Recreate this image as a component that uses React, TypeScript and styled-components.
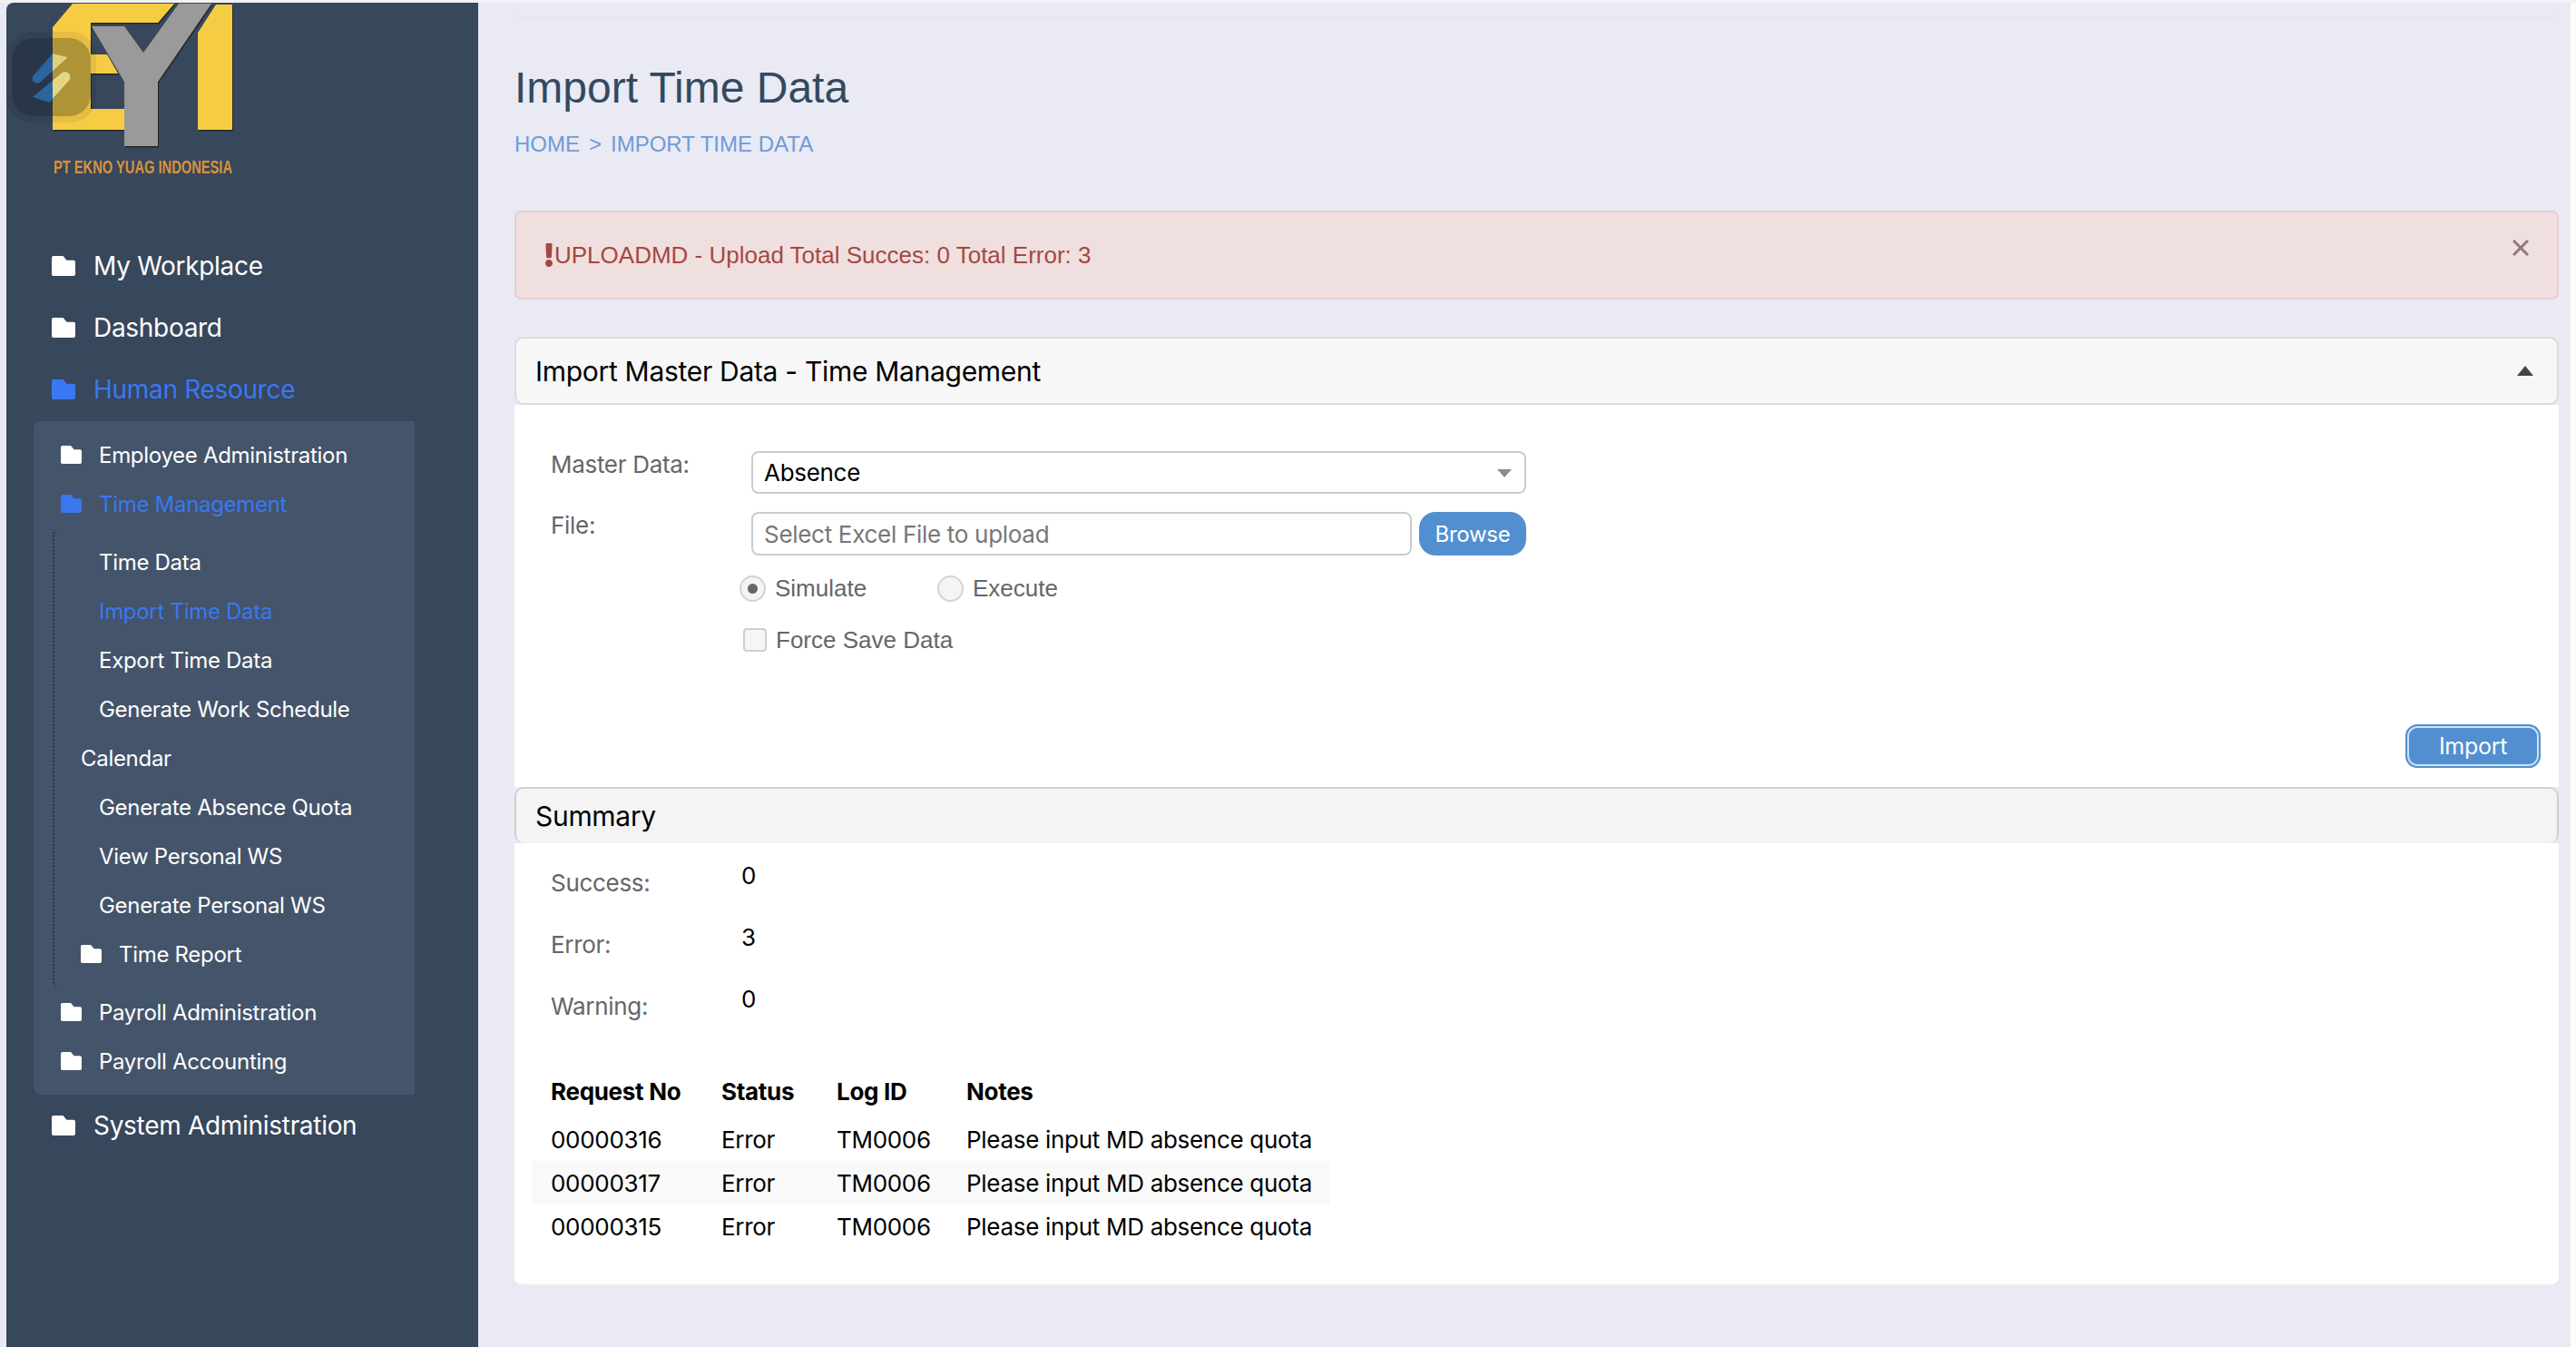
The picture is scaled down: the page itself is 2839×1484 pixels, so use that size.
import React from 'react';
import styled, { createGlobalStyle } from 'styled-components';
import { FaExclamation } from 'react-icons/fa';

const GlobalStyle = createGlobalStyle`
  html, body {
    margin: 0;
    padding: 0;
    width: 2839px;
    height: 1484px;
    overflow: hidden;
    background: #f1f2f3;
  }
  * {
    box-sizing: border-box;
  }
`;

const rubik = `Inter, "Noto Sans", sans-serif`;
const helvetica = `"Liberation Sans", Arial, sans-serif`;

const Page = styled.div`
  display: flex;
  width: 2839px;
  height: 1484px;
  padding: 3px 6px 0 0;
  background: linear-gradient(#f1f2f3 3px, #fcfcfd 3px);
  font-family: ${rubik};
`;

const Shell = styled.div`
  display: flex;
  flex: 1;
  padding-left: 7px;
  background: #e9eaf3;
`;

const Sidebar = styled.aside`
  position: relative;
  width: 520px;
  flex-shrink: 0;
  background: #37475c;
  border-top-left-radius: 8px;
`;

const LogoBox = styled.div`
  height: 259px;
  padding-left: 43px;
`;

const FloatBadge = styled.div`
  position: absolute;
  left: 0;
  top: 32px;
  width: 99px;
  height: 100px;
  padding: 7px 6px;
  border-radius: 28px;
  background: rgba(10, 15, 25, 0.08);
`;

const FloatBadgeInner = styled.div`
  width: 87px;
  height: 86px;
  border-radius: 24px;
  background: rgba(10, 15, 25, 0.24);
`;

const NavItem = styled.div<{ $active?: boolean }>`
  display: flex;
  align-items: center;
  gap: 20px;
  height: 68px;
  padding-left: 50px;
  font-size: 28px;
  letter-spacing: -0.3px;
  color: ${(p) => (p.$active ? '#3a78f2' : '#ffffff')};
`;

const SubPanel = styled.div`
  width: 420px;
  margin: 1px 0 0 30px;
  padding: 10px 0;
  background: #44546a;
  border-radius: 8px 0 0 8px;
`;

const SubItem = styled.div<{ $active?: boolean }>`
  display: flex;
  align-items: center;
  gap: 19px;
  height: 54px;
  padding-left: 30px;
  font-size: 24px;
  letter-spacing: -0.3px;
  color: ${(p) => (p.$active ? '#3a78f2' : '#ffffff')};
`;

const Tree = styled.div`
  margin-left: 21px;
  padding: 10px 0;
  border-left: 2px dotted #27313f;
  border-radius: 8px 0 0 8px;
`;

const TreeItem = styled.div<{ $active?: boolean; $indent?: number }>`
  display: flex;
  align-items: center;
  gap: 19px;
  height: 54px;
  padding-left: ${(p) => p.$indent ?? 49}px;
  font-size: 24px;
  letter-spacing: -0.3px;
  color: ${(p) => (p.$active ? '#3a78f2' : '#ffffff')};
`;

const Main = styled.main`
  flex: 1;
  min-width: 0;
  padding: 0 13px 0 40px;
`;

const TopLine = styled.div`
  height: 17px;
  border-bottom: 2px solid #e4e5ee;
  border-radius: 0 0 8px 8px;
`;

const Title = styled.h1`
  margin: 47px 0 0;
  font: 400 48px/60px ${helvetica};
  color: #34495e;
`;

const Breadcrumb = styled.div`
  display: flex;
  gap: 10px;
  margin-top: 17px;
  font: 400 24px/30px ${helvetica};
  color: #6e9bd9;
`;

const Alert = styled.div`
  position: relative;
  display: flex;
  align-items: center;
  height: 98px;
  margin-top: 58px;
  padding-left: 31px;
  background: #f0dfdf;
  border: 2px solid #e8cdd2;
  border-radius: 7px;
  font: 400 26px/30px ${helvetica};
  color: #a5483f;
`;

const AlertMark = styled(FaExclamation)`
  width: 10px;
  height: 26px;
  margin-right: 1px;
`;

const CloseIcon = styled.svg`
  position: absolute;
  right: 31px;
  top: 30px;
  width: 18px;
  height: 18px;
`;

const PanelHead = styled.div`
  display: flex;
  align-items: center;
  justify-content: space-between;
  height: 75px;
  margin-top: 41px;
  padding: 0 26px 0 21px;
  background: #f7f7f7;
  border: 2px solid #dcdcdf;
  border-radius: 10px;
  font-size: 30px;
  letter-spacing: -0.3px;
  color: #000;
`;

const Caret = styled.span`
  width: 0;
  height: 0;
  border-left: 9px solid transparent;
  border-right: 9px solid transparent;
  border-bottom: 11px solid #44464c;
`;

const Body = styled.section`
  background: #fff;
`;

const FormBody = styled(Body)`
  display: flex;
  flex-direction: column;
  height: 421px;
  padding: 51px 20px 0 40px;
`;

const FormRow = styled.div<{ $gap?: number }>`
  display: flex;
  margin-top: ${(p) => p.$gap ?? 0}px;
`;

const FieldLabel = styled.label`
  width: 221px;
  font-size: 26px;
  line-height: 30px;
  letter-spacing: -0.3px;
  color: #666;
`;

const Control = styled.div`
  position: relative;
  display: flex;
  align-items: center;
  width: 854px;
  height: 47px;
  padding-left: 12px;
  border: 2px solid #ccc;
  border-radius: 8px;
  font-size: 26px;
  letter-spacing: -0.3px;
  color: #000;
`;

const SelectArrow = styled.span`
  position: absolute;
  right: 14px;
  top: 18px;
  border-left: 8px solid transparent;
  border-right: 8px solid transparent;
  border-top: 9px solid #8c8c8c;
`;

const FileInput = styled(Control)`
  width: 728px;
  height: 48px;
  color: #777;
`;

const Browse = styled.button`
  width: 118px;
  height: 48px;
  margin-left: 8px;
  padding: 0;
  border: 0;
  border-radius: 18px;
  background: #528fd0;
  font: 400 24px ${rubik};
  letter-spacing: -0.3px;
  color: #fff;
`;

const Options = styled.div`
  display: flex;
  align-items: center;
  padding-left: 208px;
  font: 400 26px/30px ${helvetica};
  color: #666;
`;

const Radio = styled.span<{ $on?: boolean }>`
  display: flex;
  align-items: center;
  justify-content: center;
  width: 29px;
  height: 29px;
  margin-right: 10px;
  border: 2px solid #d4d4d4;
  border-radius: 50%;
  background: #f4f4f4;

  &::after {
    content: '';
    display: ${(p) => (p.$on ? 'block' : 'none')};
    width: 11px;
    height: 11px;
    border-radius: 50%;
    background: #666;
  }
`;

const RadioGroup = styled.div`
  display: flex;
  align-items: center;
  width: 218px;
`;

const Check = styled.span`
  width: 26px;
  height: 26px;
  margin: 0 10px 0 4px;
  border: 2px solid #cfcfcf;
  border-radius: 4px;
  background: #f6f6f6;
`;

const ImportRow = styled.div`
  display: flex;
  justify-content: flex-end;
  margin-top: 78px;
`;

const ImportButton = styled.button`
  width: 149px;
  height: 48px;
  padding: 0;
  border: 2px solid #528fd0;
  border-radius: 13px;
  background: #528fd0;
  box-shadow: inset 0 0 0 2px #cfe2f6;
  font: 400 25px ${rubik};
  letter-spacing: -0.3px;
  color: #fff;
`;

const SummaryHead = styled.div`
  display: flex;
  align-items: center;
  height: 62px;
  padding-left: 21px;
  background: #f4f4f4;
  border: 2px solid #cfcfcf;
  border-bottom: 0;
  border-radius: 10px 10px 10px 10px;
  font-size: 30px;
  letter-spacing: -0.3px;
  color: #000;
`;

const SummaryBody = styled(Body)`
  height: 486px;
  padding: 10px 0 0 19px;
  border-radius: 0 0 8px 8px;
`;

const Stat = styled.div`
  display: flex;
  height: 68px;
  padding-left: 21px;
`;

const StatLabel = styled.span`
  width: 210px;
  padding-top: 17px;
  font-size: 26px;
  line-height: 34px;
  letter-spacing: -0.3px;
  color: #666;
`;

const StatValue = styled.span`
  padding-top: 9px;
  font-size: 26px;
  line-height: 34px;
  color: #000;
`;

const LogTable = styled.table`
  width: 880px;
  margin-top: 30px;
  border-collapse: collapse;
  table-layout: fixed;
  font-size: 26px;
  letter-spacing: -0.3px;
  color: #000;
`;

const HeadCell = styled.th`
  height: 58px;
  padding: 0 0 0 21px;
  text-align: left;
  font-weight: 700;
`;

const Cell = styled.td`
  height: 48px;
  padding: 0 0 0 21px;
`;

const LogRow = styled.tr<{ $odd?: boolean }>`
  background: ${(p) => (p.$odd ? '#f9f9f9' : 'transparent')};
`;

const MarkSvg = styled.svg`
  position: absolute;
  left: 23px;
  top: 15px;
`;

const Folder = ({ w = 26, h = 22, color = 'currentColor' }: { w?: number; h?: number; color?: string }) => (
  <svg width={w} height={h} viewBox="0 0 26 22" preserveAspectRatio="none" style={{ flexShrink: 0 }}>
    <path
      d="M2 0h10.5l4 4.8H24a2 2 0 0 1 2 2V20a2 2 0 0 1-2 2H2a2 2 0 0 1-2-2V2a2 2 0 0 1 2-2z"
      fill={color}
    />
  </svg>
);

const Logo = () => (
  <svg width="320" height="200" viewBox="50 0 320 200" style={{ display: 'block', marginTop: -3 }}>
    <defs>
      <filter id="logoEdge" x="-5%" y="-5%" width="110%" height="110%">
        <feDropShadow dx="1" dy="1.5" stdDeviation="0.7" floodColor="#1a1a12" floodOpacity="0.85" />
      </filter>
    </defs>
    <g filter="url(#logoEdge)">
      <polygon fill="#f7cc45" points="58,30 80,4 192,4 174,25 100,25 100,60 118,60 130,81 100,81 100,120 160,120 143,143 58,143" />
      <polygon fill="#f7cc45" points="218,36 238,5 256,5 256,143 218,143" />
      <polygon fill="#9a9a9a" points="101,29 137,29 158,58 197,4 233,4 174,90 174,161 137,161 137,90" />
    </g>
    <text
      x="59"
      y="191"
      textLength="197"
      lengthAdjust="spacingAndGlyphs"
      fill="#d9923a"
      fontFamily='"Liberation Sans", Arial, sans-serif'
      fontWeight="700"
      fontSize="20"
    >
      PT EKNO YUAG INDONESIA
    </text>
  </svg>
);

// the floating widget mark that lies over the logo
const BadgeMark = () => (
  <MarkSvg width="60" height="70" viewBox="30 50 60 70">
    <path d="M58 59l17 4-30 27a5 5 0 0 1-8-7z" fill="#2b659f" />
    <path d="M36 107l31-26a6 6 0 0 1 9 8l-21 24z" fill="#2b659f" />
    <path d="M58 59l17 4-17 15.3z" fill="#e2d078" />
    <path d="M58 88.5l9-7.5a6 6 0 0 1 9 8l-18 20z" fill="#e6d680" />
  </MarkSvg>
);

const treeRows = ['Generate Absence Quota', 'View Personal WS', 'Generate Personal WS'];
const logs = [
  { no: '00000316', status: 'Error', id: 'TM0006', note: 'Please input MD absence quota' },
  { no: '00000317', status: 'Error', id: 'TM0006', note: 'Please input MD absence quota' },
  { no: '00000315', status: 'Error', id: 'TM0006', note: 'Please input MD absence quota' },
];

const App = () => (
  <Page>
    <GlobalStyle />
    <Shell>
      <Sidebar>
        <LogoBox>
          <Logo />
        </LogoBox>
        <FloatBadge>
          <FloatBadgeInner />
          <BadgeMark />
        </FloatBadge>
        <NavItem><Folder />My Workplace</NavItem>
        <NavItem><Folder />Dashboard</NavItem>
        <NavItem $active><Folder />Human Resource</NavItem>
        <SubPanel>
          <SubItem><Folder w={23} h={20} />Employee Administration</SubItem>
          <SubItem $active><Folder w={23} h={20} />Time Management</SubItem>
          <Tree>
            <TreeItem>Time Data</TreeItem>
            <TreeItem $active>Import Time Data</TreeItem>
            <TreeItem>Export Time Data</TreeItem>
            <TreeItem>Generate Work Schedule</TreeItem>
            <TreeItem $indent={29}>Calendar</TreeItem>
            {treeRows.map((r) => (
              <TreeItem key={r}>{r}</TreeItem>
            ))}
            <TreeItem $indent={29}><Folder w={23} h={20} />Time Report</TreeItem>
          </Tree>
          <SubItem><Folder w={23} h={20} />Payroll Administration</SubItem>
          <SubItem><Folder w={23} h={20} />Payroll Accounting</SubItem>
        </SubPanel>
        <NavItem><Folder />System Administration</NavItem>
      </Sidebar>
      <Main>
        <TopLine />
        <Title>Import Time Data</Title>
        <Breadcrumb>
          <span>HOME</span>
          <span>&gt;</span>
          <span>IMPORT TIME DATA</span>
        </Breadcrumb>
        <Alert>
          <AlertMark />
          <span>UPLOADMD - Upload Total Succes: 0 Total Error: 3</span>
          <CloseIcon viewBox="0 0 18 18">
            <path d="M1 1l16 16M17 1L1 17" stroke="#8d7b7b" strokeWidth="3" />
          </CloseIcon>
        </Alert>
        <PanelHead>
          Import Master Data - Time Management
          <Caret />
        </PanelHead>
        <FormBody>
          <FormRow>
            <FieldLabel>Master Data:</FieldLabel>
            <Control>
              Absence
              <SelectArrow />
            </Control>
          </FormRow>
          <FormRow $gap={20}>
            <FieldLabel>File:</FieldLabel>
            <FileInput>Select Excel File to upload</FileInput>
            <Browse>Browse</Browse>
          </FormRow>
          <FormRow $gap={21}>
            <Options>
              <RadioGroup><Radio $on />Simulate</RadioGroup>
              <RadioGroup><Radio />Execute</RadioGroup>
            </Options>
          </FormRow>
          <FormRow $gap={27}>
            <Options>
              <Check />Force Save Data
            </Options>
          </FormRow>
          <ImportRow>
            <ImportButton>Import</ImportButton>
          </ImportRow>
        </FormBody>
        <SummaryHead>Summary</SummaryHead>
        <SummaryBody>
          <Stat><StatLabel>Success:</StatLabel><StatValue>0</StatValue></Stat>
          <Stat><StatLabel>Error:</StatLabel><StatValue>3</StatValue></Stat>
          <Stat><StatLabel>Warning:</StatLabel><StatValue>0</StatValue></Stat>
          <LogTable>
            <colgroup>
              <col style={{ width: 188 }} />
              <col style={{ width: 127 }} />
              <col style={{ width: 143 }} />
              <col />
            </colgroup>
            <thead>
              <tr>
                <HeadCell>Request No</HeadCell>
                <HeadCell>Status</HeadCell>
                <HeadCell>Log ID</HeadCell>
                <HeadCell>Notes</HeadCell>
              </tr>
            </thead>
            <tbody>
              {logs.map((l, i) => (
                <LogRow key={l.no} $odd={i === 1}>
                  <Cell>{l.no}</Cell>
                  <Cell>{l.status}</Cell>
                  <Cell>{l.id}</Cell>
                  <Cell>{l.note}</Cell>
                </LogRow>
              ))}
            </tbody>
          </LogTable>
        </SummaryBody>
      </Main>
    </Shell>
  </Page>
);

export default App;
